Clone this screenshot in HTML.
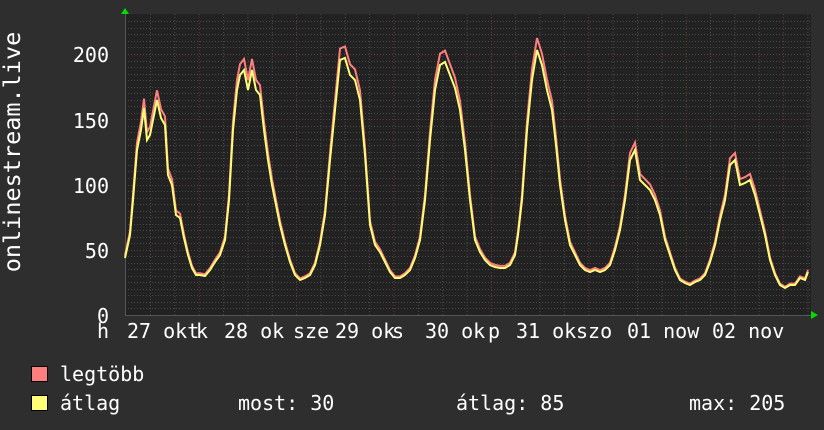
<!DOCTYPE html>
<html><head><meta charset="utf-8"><style>
html,body{margin:0;padding:0;background:#2e2e2e;}
svg{display:block}
text{font-family:"DejaVu Sans Mono","Liberation Mono",monospace;fill:#fff;font-size:20px}
</style></head><body>
<svg width="824" height="430" viewBox="0 0 824 430">
<rect width="824" height="430" fill="#2e2e2e"/>
<rect x="125" y="14" width="686" height="301" fill="#222222"/>
<g id="grid" stroke-width="1" fill="none">
</g>
<polyline id="red" fill="none" stroke="#ff7f7f" stroke-width="2" stroke-linejoin="miter"/>
<polyline id="yel" fill="none" stroke="#ffff77" stroke-width="2" stroke-linejoin="miter"/>
<polygon points="121,14 129,14 125,8" fill="#00dd00"/>
<polygon points="811,311 811,319 818,315" fill="#00dd00"/>
<g text-anchor="end">
<text x="109" y="62">200</text>
<text x="109" y="128">150</text>
<text x="109" y="193">100</text>
<text x="109" y="258">50</text>
<text x="109" y="323">0</text>
</g>
<text transform="translate(20,152) rotate(-90)" text-anchor="middle" style="font-size:23.5px">onlinestream.live</text>
<g>
<text x="97" y="338">h</text><text x="127" y="338">27 okt</text>
<text x="196" y="338">k</text><text x="224" y="338">28 ok</text><text x="293" y="338">sze</text>
<text x="335" y="338">29 ok</text><text x="392" y="338">s</text>
<text x="425" y="338">30 ok</text><text x="488" y="338">p</text>
<text x="516" y="338">31 ok</text><text x="576" y="338">szo</text>
<text x="627" y="338">01 now</text>
<text x="712" y="338">02 nov</text>
</g>
<rect x="31.5" y="366.5" width="16" height="15" fill="#ff7f7f" stroke="#000"/>
<rect x="31.5" y="395.5" width="16" height="15" fill="#ffff77" stroke="#000"/>
<text x="60" y="381">legtöbb</text>
<text x="60" y="410">átlag</text>
<text x="238" y="410">most: 30</text>
<text x="456" y="410">átlag: 85</text>
<text x="689" y="410">max: 205</text>
</svg>
<script>
var ns="http://www.w3.org/2000/svg";
var g=document.getElementById("grid");
function ln(x1,y1,x2,y2,c,d){var l=document.createElementNS(ns,"line");l.setAttribute("x1",x1);l.setAttribute("y1",y1);l.setAttribute("x2",x2);l.setAttribute("y2",y2);l.setAttribute("stroke",c);if(d)l.setAttribute("stroke-dasharray",d);g.appendChild(l);}
for(var v=5;v<=225;v+=5){var y=Math.round(315-v*1.305)+0.5;if(y<14)break;ln(125,y,811,y,v%50==0?"#6a3b3b":"#4a4a4a","1,2");}
for(var x=150.5;x<811;x+=24.35){var isDay=false;for(var k=0;k<7;k++){if(Math.abs(x-(199.5+97.35*k))<5)isDay=true;}ln(x,14,x,315,isDay?"#6a3b3b":"#4a4a4a","1,2");}
ln(125,315.5,811,315.5,"#555");ln(125.5,14,125.5,315,"#555");
var pts=[125,258,130,235,133,200,137,150,141,130,144,108,147,140,150,135,154,115,157,100,161,118,165,125,168,175,172,185,176,215,180,218,184,238,188,255,192,268,196,275,200,275,205,276,210,270,215,262,220,255,225,240,229,200,233,130,237,90,240,75,244,70,248,90,252,70,256,90,260,95,264,130,268,160,272,185,276,205,280,225,285,245,290,262,295,275,300,280,305,278,310,275,315,265,320,245,325,215,330,160,335,110,340,60,345,58,350,75,355,80,360,100,365,155,370,225,375,245,380,252,385,262,390,272,395,278,400,278,405,275,410,270,415,258,420,240,425,200,430,140,435,90,440,65,445,62,450,75,455,88,460,110,465,150,470,200,475,240,480,252,485,260,490,265,495,267,500,268,505,268,510,265,515,255,518,235,522,200,527,130,532,80,537,50,542,65,547,90,552,110,556,145,560,185,565,220,570,245,575,255,580,265,585,270,590,272,595,270,600,272,605,270,610,265,615,250,620,230,625,200,630,160,635,150,640,180,645,185,650,190,655,200,660,215,665,240,670,255,675,270,680,280,685,283,690,285,695,282,700,280,705,275,710,262,715,245,720,220,725,200,730,165,735,160,740,185,745,183,750,180,755,195,760,215,765,235,770,260,775,275,780,285,785,288,790,285,795,285,800,278,805,280,808,272];
var s1="",s2="";
for(var i=0;i<pts.length;i+=2){var x=pts[i],y=pts[i+1];s2+=x+","+y+" ";s1+=x+","+(315-(315-y)*1.045)+" ";}
document.getElementById("red").setAttribute("points",s1);
document.getElementById("yel").setAttribute("points",s2);
</script>
</body></html>
